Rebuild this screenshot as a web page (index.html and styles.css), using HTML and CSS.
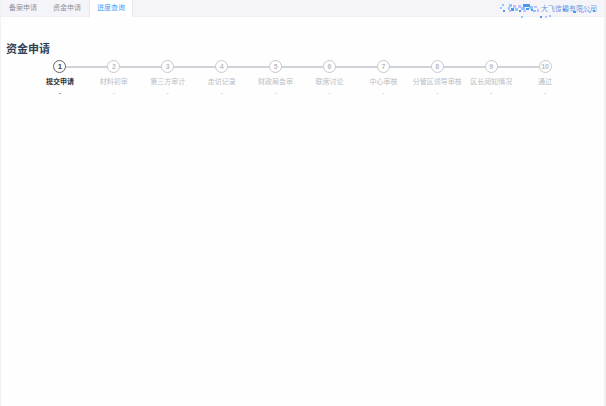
FILE: index.html
```html
<!DOCTYPE html>
<html lang="zh-CN">
<head>
    <meta charset="UTF-8">
    <meta name="viewport" content="width=device-width, initial-scale=1.0">
    <title>进度查询</title>
    <link rel="stylesheet" href="styles.css">
</head>
<body>
    <div class="page">
        <header class="topbar">
            <nav class="tabs">
                <a class="tab" href="#">备案申请</a>
                <a class="tab" href="#">资金申请</a>
                <a class="tab active" href="#">进度查询</a>
            </nav>
            <div class="company">
                <span>大飞传播有限公司</span>
                <svg class="mosaic" width="98" height="16" viewBox="0 0 98 16" aria-hidden="true">
                    <g fill="#8cc8ff">
                        <rect x="3" y="1" width="2" height="2"/>
                        <rect x="1" y="4" width="2" height="2"/>
                        <rect x="10" y="1" width="3" height="3"/>
                        <rect x="9" y="4" width="2" height="3"/>
                        <rect x="16" y="5" width="3" height="3"/>
                        <rect x="22" y="4" width="4" height="3"/>
                        <rect x="30" y="3" width="4" height="3"/>
                        <rect x="34" y="7" width="3" height="2"/>
                        <rect x="22" y="13" width="2" height="2"/>
                        <rect x="50" y="12" width="2" height="2"/>
                        <rect x="66" y="2" width="3" height="3"/>
                        <rect x="90" y="8" width="2" height="2"/>
                    </g>
                    <g fill="#4b98f0">
                        <rect x="4" y="7" width="2" height="2"/>
                        <rect x="12" y="5" width="3" height="3"/>
                        <rect x="24" y="1" width="7" height="3"/>
                        <rect x="27" y="5" width="3" height="2"/>
                        <rect x="20" y="7" width="2" height="2"/>
                        <rect x="32" y="6" width="2" height="2"/>
                        <rect x="41" y="13" width="2" height="2"/>
                        <rect x="64" y="6" width="2" height="2"/>
                        <rect x="74" y="8" width="3" height="2"/>
                        <rect x="94" y="7" width="2" height="2"/>
                    </g>
                    <g fill="#c3c0fb">
                        <rect x="14" y="2" width="3" height="3"/>
                        <rect x="10" y="7" width="2" height="2"/>
                        <rect x="19" y="2" width="3" height="3"/>
                        <rect x="24" y="7" width="3" height="2"/>
                        <rect x="35" y="3" width="3" height="2"/>
                        <rect x="38" y="6" width="2" height="3"/>
                        <rect x="46" y="13" width="2" height="2"/>
                        <rect x="57" y="7" width="3" height="2"/>
                        <rect x="82" y="8" width="3" height="2"/>
                    </g>
                </svg>
            </div>
        </header>

        <main class="content">
            <h1>资金申请</h1>
            <ol class="steps">
                <li class="step current"><span class="num">1</span><span class="title">提交申请</span><span class="desc">-</span></li>
                <li class="step"><span class="num">2</span><span class="title">材料初审</span><span class="desc">-</span></li>
                <li class="step"><span class="num">3</span><span class="title">第三方审计</span><span class="desc">-</span></li>
                <li class="step"><span class="num">4</span><span class="title">走访记录</span><span class="desc">-</span></li>
                <li class="step"><span class="num">5</span><span class="title">财政局会审</span><span class="desc">-</span></li>
                <li class="step"><span class="num">6</span><span class="title">联席讨论</span><span class="desc">-</span></li>
                <li class="step"><span class="num">7</span><span class="title">中心审核</span><span class="desc">-</span></li>
                <li class="step"><span class="num">8</span><span class="title">分管区领导审核</span><span class="desc">-</span></li>
                <li class="step"><span class="num">9</span><span class="title">区长阅知情况</span><span class="desc">-</span></li>
                <li class="step"><span class="num">10</span><span class="title">通过</span><span class="desc">-</span></li>
            </ol>
        </main>
    </div>
</body>
</html>
```
FILE: styles.css
```css
* {
    box-sizing: border-box;
}

body {
    margin: 0;
    font-family: "Liberation Sans", "Noto Sans CJK SC", sans-serif;
    font-size: 7px;
    background-color: #fff;
}

.page {
    min-height: 100vh;
    border-left: 1px solid #f0f1f3;
    border-right: 2px solid #f0f0f2;
    background-color: #fefefe;
}

.topbar {
    display: flex;
    justify-content: space-between;
    height: 17px;
    background-color: #f5f5f9;
    border-bottom: 1px solid #f0f1f4;
}

.tabs {
    display: flex;
}

.tab {
    height: 17px;
    padding: 0 7px;
    line-height: 16px;
    color: #909399;
    text-decoration: none;
    border-left: 1px solid transparent;
    border-right: 1px solid transparent;
}

.tab.active {
    color: #409eff;
    background-color: #fff;
    border-color: #e4e7ed;
}

.company {
    position: relative;
    width: 98px;
    margin-right: 7px;
    line-height: 17px;
    text-align: right;
    color: #6d9be0;
}

/* mosaic over the company name */
.mosaic {
    position: absolute;
    top: 3px;
    left: 0;
}

.content {
    padding: 24px 32px 0 5px;
}

h1 {
    margin: 0;
    font-size: 11px;
    line-height: 16px;
    color: #304156;
}

.steps {
    display: flex;
    margin: 3px 0 0 27px;
    padding: 0;
    list-style: none;
}

.step {
    position: relative;
    flex: 1 1 0;
    min-width: 0;
    display: flex;
    flex-direction: column;
    align-items: center;
    color: #b9bdc6;
    white-space: nowrap;
}

/* connecting line to the next step */
.step:not(:last-child)::after {
    content: "";
    position: absolute;
    top: 6px;
    left: 50%;
    width: 100%;
    height: 2px;
    background-color: #cfd2d8;
}

.num {
    position: relative;
    z-index: 1;
    width: 13px;
    height: 13px;
    border: 1px solid #c5c8cf;
    border-radius: 50%;
    background-color: #fff;
    line-height: 11px;
    text-align: center;
    font-weight: bold;
}

.title {
    margin-top: 3px;
    line-height: 12px;
}

.desc {
    line-height: 10px;
}

.step.current {
    color: #303133;
}

.step.current .num {
    border-color: #606266;
}

.step.current .title {
    font-weight: bold;
}
```
